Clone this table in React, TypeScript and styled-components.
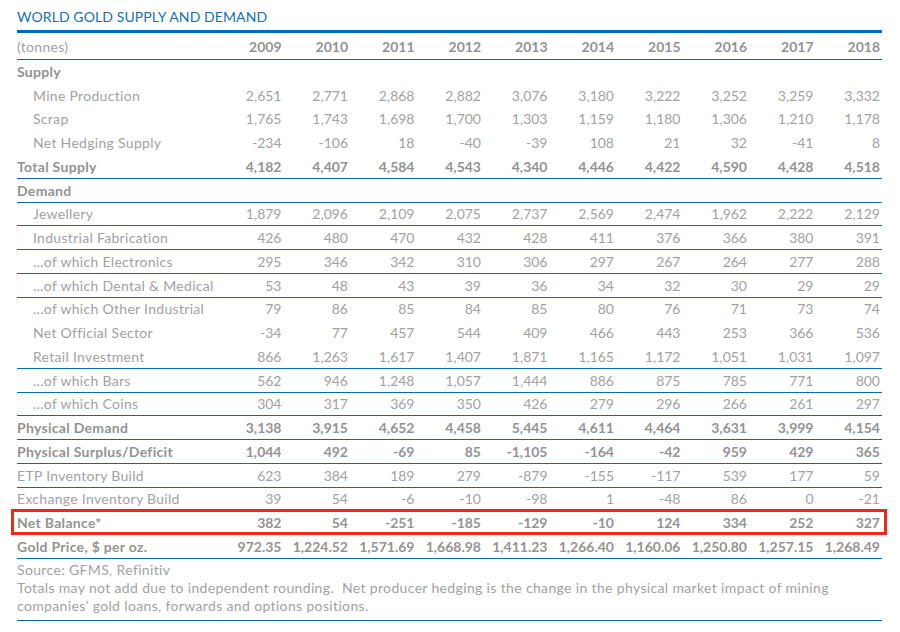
import React from "react";
import styled, { createGlobalStyle } from "styled-components";

const GlobalStyle = createGlobalStyle`
  html, body {
    margin: 0;
    padding: 0;
    background: #fff;
  }
  body {
    font-family: Lato, "Open Sans", sans-serif;
  }
`;

type Row = {
  label: string;
  values?: string[];
  bold?: boolean;
  indent?: boolean;
  line?: boolean;
  highlight?: boolean;
};

const years = ["2009", "2010", "2011", "2012", "2013", "2014", "2015", "2016", "2017", "2018"];

const split = (s: string) => s.split(" ");

const rows: Row[] = [
  { label: "Supply", bold: true },
  { label: "Mine Production", indent: true, values: split("2,651 2,771 2,868 2,882 3,076 3,180 3,222 3,252 3,259 3,332") },
  { label: "Scrap", indent: true, values: split("1,765 1,743 1,698 1,700 1,303 1,159 1,180 1,306 1,210 1,178") },
  { label: "Net Hedging Supply", indent: true, values: split("-234 -106 18 -40 -39 108 21 32 -41 8") },
  { label: "Total Supply", bold: true, line: true, values: split("4,182 4,407 4,584 4,543 4,340 4,446 4,422 4,590 4,428 4,518") },
  { label: "Demand", bold: true, line: true },
  { label: "Jewellery", indent: true, line: true, values: split("1,879 2,096 2,109 2,075 2,737 2,569 2,474 1,962 2,222 2,129") },
  { label: "Industrial Fabrication", indent: true, line: true, values: split("426 480 470 432 428 411 376 366 380 391") },
  { label: "...of which Electronics", indent: true, line: true, values: split("295 346 342 310 306 297 267 264 277 288") },
  { label: "...of which Dental & Medical", indent: true, line: true, values: split("53 48 43 39 36 34 32 30 29 29") },
  { label: "...of which Other Industrial", indent: true, values: split("79 86 85 84 85 80 76 71 73 74") },
  { label: "Net Official Sector", indent: true, values: split("-34 77 457 544 409 466 443 253 366 536") },
  { label: "Retail Investment", indent: true, line: true, values: split("866 1,263 1,617 1,407 1,871 1,165 1,172 1,051 1,031 1,097") },
  { label: "...of which Bars", indent: true, line: true, values: split("562 946 1,248 1,057 1,444 886 875 785 771 800") },
  { label: "...of which Coins", indent: true, line: true, values: split("304 317 369 350 426 279 296 266 261 297") },
  { label: "Physical Demand", bold: true, line: true, values: split("3,138 3,915 4,652 4,458 5,445 4,611 4,464 3,631 3,999 4,154") },
  { label: "Physical Surplus/Deficit", bold: true, line: true, values: split("1,044 492 -69 85 -1,105 -164 -42 959 429 365") },
  { label: "ETP Inventory Build", line: true, values: split("623 384 189 279 -879 -155 -117 539 177 59") },
  { label: "Exchange Inventory Build", values: split("39 54 -6 -10 -98 1 -48 86 0 -21") },
  { label: "Net Balance*", bold: true, highlight: true, values: split("382 54 -251 -185 -129 -10 124 334 252 327") },
  { label: "Gold Price, $ per oz.", bold: true, line: true, values: split("972.35 1,224.52 1,571.69 1,668.98 1,411.23 1,266.40 1,160.06 1,250.80 1,257.15 1,268.49") },
];

const App = () => {
  return (
    <>
      <GlobalStyle />
      <Page>
        <Title>World Gold Supply and Demand</Title>
        <Table>
          <HeaderRow>
            <Label>(tonnes)</Label>
            {years.map((y) => (
              <Cell key={y} $bold>
                {y}
              </Cell>
            ))}
          </HeaderRow>
          {rows.map((r) => (
            <DataRow key={r.label} $line={r.line} $highlight={r.highlight}>
              <Label $bold={r.bold} $indent={r.indent}>
                {r.label}
              </Label>
              {years.map((y, i) => (
                <Cell key={y} $bold={r.bold}>
                  {r.values ? r.values[i] : ""}
                </Cell>
              ))}
            </DataRow>
          ))}
        </Table>
        <Notes>
          <div>Source: GFMS, Refinitiv</div>
          <div>
            Totals may not add due to independent rounding.&nbsp; Net producer hedging is the change in the
            physical market impact of mining
            <br />
            companies’ gold loans, forwards and options positions.
          </div>
        </Notes>
      </Page>
    </>
  );
};

export default App;

const Page = styled.div`
  width: 865px;
  padding: 0 18px 0 17px;
  color: #a3a3a3;
`;

const Title = styled.div`
  height: 33px;
  line-height: 33px;
  font-size: 14px;
  color: #1670b8;
  text-transform: uppercase;
  letter-spacing: 0.1px;
  border-bottom: 3px solid #0a69b4;
  box-sizing: border-box;
`;

const Table = styled.div`
  display: flex;
  flex-direction: column;
`;

const HeaderRow = styled.div`
  display: grid;
  grid-template-columns: 200px repeat(10, 1fr);
  height: 27px;
  align-items: center;
  border-bottom: 1px solid #0a69b4;
  box-sizing: border-box;
  padding-top: 1px;
`;

const DataRow = styled.div<{ $line?: boolean; $highlight?: boolean }>`
  position: relative;
  display: grid;
  grid-template-columns: 200px repeat(10, 1fr);
  height: 23.75px;
  align-items: center;
  box-sizing: border-box;
  border-bottom: 1px solid ${(p) => (p.$line ? "#0a69b4" : "transparent")};

  ${(p) =>
    p.$highlight &&
    `
    &::after {
      content: "";
      position: absolute;
      left: -6px;
      right: -5px;
      top: -2px;
      bottom: -1px;
      border: 3px solid #ec2a1c;
    }
  `}
`;

const Label = styled.div<{ $bold?: boolean; $indent?: boolean }>`
  font-size: 14px;
  font-weight: ${(p) => (p.$bold ? 700 : 400)};
  letter-spacing: 0.3px;
  color: ${(p) => (p.$bold ? "#939393" : "#a2a2a2")};
  padding-left: ${(p) => (p.$indent ? "16px" : "0")};
  white-space: nowrap;
`;

const Cell = styled.div<{ $bold?: boolean }>`
  font-size: 14px;
  font-weight: ${(p) => (p.$bold ? 700 : 400)};
  color: ${(p) => (p.$bold ? "#939393" : "#a2a2a2")};
  text-align: right;
  padding-right: 2px;
  white-space: nowrap;
`;

const Notes = styled.div`
  font-size: 14px;
  letter-spacing: 0.35px;
  line-height: 18px;
  color: #a2a2a2;
  padding: 2px 0 5px;
  border-bottom: 1px solid #0a69b4;
`;
